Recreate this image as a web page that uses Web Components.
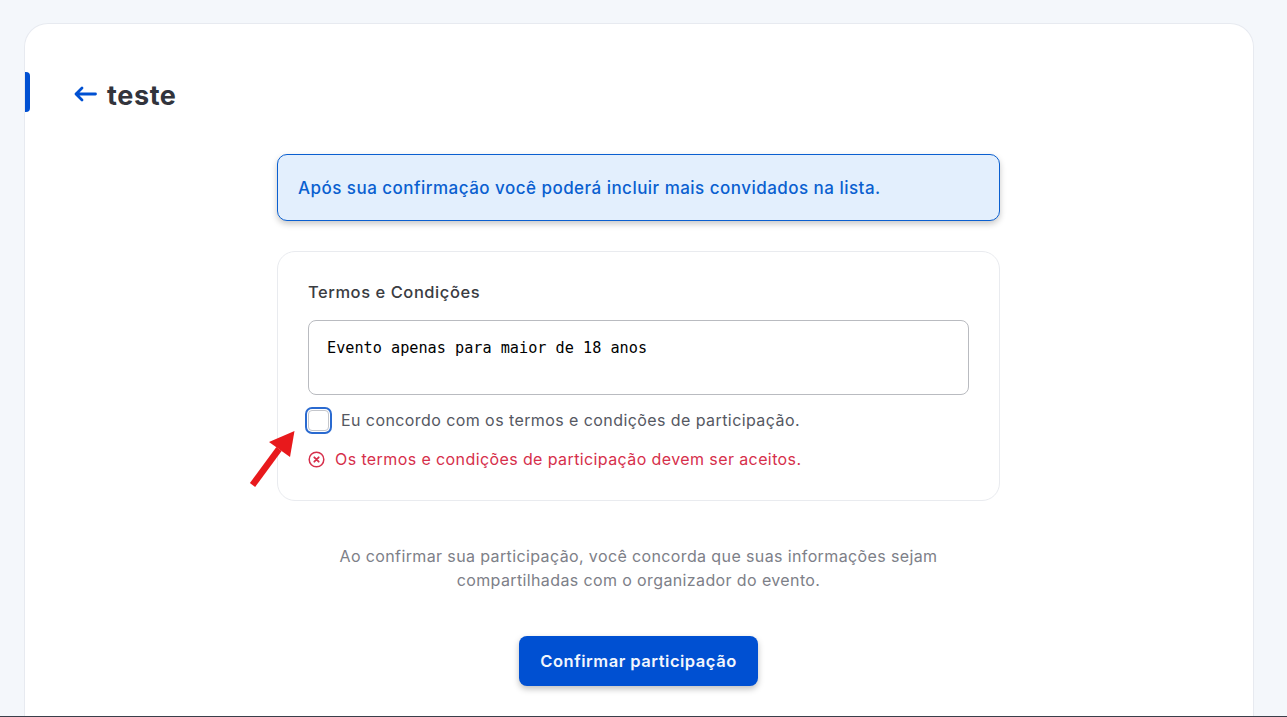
<!DOCTYPE html>
<html lang="pt-BR">
<head>
<meta charset="utf-8">
<title>teste</title>
<style>
html, body { margin: 0; height: 100%; overflow: hidden; }
body { background: #f4f7fb; font-family: Inter, "Open Sans", sans-serif; }
</style>
</head>
<body>
<event-page>
  <page-header slot="header">teste</page-header>
  <info-alert>Após sua confirmação você poderá incluir mais convidados na lista.</info-alert>
  <terms-box heading="Termos e Condições" terms="Evento apenas para maior de 18 anos"></terms-box>
  <p slot="note">Ao confirmar sua participação, você concorda que suas informações sejam<br>compartilhadas com o organizador do evento.</p>
  <primary-button slot="action">Confirmar participação</primary-button>
</event-page>
<script>
"use strict";
class EventPage extends HTMLElement {
    constructor() {
        super();
        this.attachShadow({ mode: 'open' });
    }
    connectedCallback() {
        this.shadowRoot.innerHTML = `
            <style>
                :host {
                    display: flex;
                    flex-direction: column;
                    box-sizing: border-box;
                    height: 717px;
                    padding-top: 23px;
                    border-bottom: 1px solid #3a3f4a;
                }
                .card {
                    flex: 1;
                    margin: 0 33px 0 24px;
                    min-height: 0;
                    background: #fff;
                    border: 1px solid #e7eaf0;
                    border-bottom: none;
                    border-radius: 24px 24px 0 0;
                    overflow: hidden;
                    position: relative;
                }
                .accent {
                    position: absolute;
                    left: 0;
                    top: 48px;
                    width: 5px;
                    height: 40px;
                    background: #0050d2;
                    border-radius: 0 4px 4px 0;
                }
                .head { padding: 53px 0 0 49px; }
                .col {
                    width: 723px;
                    margin: 41px auto 0 252px;
                    display: flex;
                    flex-direction: column;
                }
                ::slotted(p) {
                    margin: 43px 0 0;
                    font-size: 16px;
                    letter-spacing: .38px;
                    line-height: 24px;
                    color: #7d8088;
                    text-align: center;
                }
                .action {
                    display: flex;
                    justify-content: center;
                    margin-top: 44px;
                }
            </style>
            <div class="card">
                <div class="accent"></div>
                <div class="head"><slot name="header"></slot></div>
                <div class="col">
                    <slot></slot>
                    <slot name="note"></slot>
                    <div class="action"><slot name="action"></slot></div>
                </div>
            </div>
        `;
    }
}
customElements.define('event-page', EventPage);

class PageHeader extends HTMLElement {
    constructor() {
        super();
        this.attachShadow({ mode: 'open' });
    }
    connectedCallback() {
        this.shadowRoot.innerHTML = `
            <style>
                :host {
                    display: flex;
                    align-items: center;
                    gap: 10px;
                    height: 36px;
                    font-size: 27px;
                    letter-spacing: .6px;
                    font-weight: 700;
                    color: #32343c;
                }
                svg { display: block; margin-top: -3px; }
            </style>
            <svg width="23" height="16" viewBox="0 0 23 16" fill="none" stroke="#0050d2" stroke-width="2.8" stroke-linecap="round" stroke-linejoin="round">
                <path d="M21.5 8H2M8 2 2 8l6 6"/>
            </svg>
            <slot></slot>
        `;
    }
}
customElements.define('page-header', PageHeader);

class InfoAlert extends HTMLElement {
    constructor() {
        super();
        this.attachShadow({ mode: 'open' });
    }
    connectedCallback() {
        this.shadowRoot.innerHTML = `
            <style>
                :host {
                    display: flex;
                    align-items: center;
                    box-sizing: border-box;
                    height: 67px;
                    padding: 0 20px;
                    background: #e3effd;
                    border: 1px solid #0a5fd0;
                    border-radius: 10px;
                    box-shadow: 0 3px 6px rgba(0, 0, 0, .22);
                    font-size: 17px;
                    letter-spacing: .47px;
                    font-weight: 500;
                    color: #0a5fd0;
                }
            </style>
            <slot></slot>
        `;
    }
}
customElements.define('info-alert', InfoAlert);

class TermsBox extends HTMLElement {
    constructor() {
        super();
        this.attachShadow({ mode: 'open' });
    }
    connectedCallback() {
        this.shadowRoot.innerHTML = `
            <style>
                :host {
                    display: block;
                    position: relative;
                    box-sizing: border-box;
                    height: 250px;
                    margin-top: 30px;
                    padding: 29px 30px 0 30px;
                    background: #fff;
                    border: 1px solid #e9ebef;
                    border-radius: 18px;
                }
                h3 {
                    margin: 0;
                    font-size: 16.5px;
                    letter-spacing: .55px;
                    line-height: 22px;
                    font-weight: 500;
                    color: #3a3c42;
                }
                .terms {
                    box-sizing: border-box;
                    height: 75px;
                    margin-top: 17px;
                    padding: 17px 18px;
                    border: 1px solid #b9bbc0;
                    border-radius: 8px;
                    font: 15.2px/20px "DejaVu Sans Mono", "Liberation Mono", monospace;
                    color: #000;
                }
                .check {
                    display: flex;
                    align-items: center;
                    gap: 12px;
                    margin-top: 11px;
                    height: 28px;
                    font-size: 16px;
                    letter-spacing: .42px;
                    color: #555862;
                }
                .box {
                    box-sizing: border-box;
                    width: 21px;
                    height: 21px;
                    background: #fff;
                    border: 1px solid #c4c6cb;
                    border-radius: 4px;
                    box-shadow: 0 0 0 1px #fff, 0 0 0 3px #2a6ad0;
                }
                .error {
                    display: flex;
                    align-items: center;
                    gap: 10px;
                    margin-top: 14px;
                    height: 22px;
                    font-size: 16px;
                    letter-spacing: .4px;
                    color: #d62f4b;
                }
                svg { display: block; flex: none; }
            </style>
            <h3></h3>
            <div class="terms"></div>
            <label class="check"><span class="box"></span><span>Eu concordo com os termos e condições de participação.</span></label>
            <div class="error">
                <svg width="17" height="17" viewBox="0 0 17 17" fill="none" stroke="#d62f4b" stroke-linecap="round">
                    <circle cx="8.5" cy="8.5" r="7.3" stroke-width="1.5"/>
                    <path d="M6.3 6.3l4.4 4.4M10.7 6.3l-4.4 4.4" stroke-width="1.8"/>
                </svg>
                <span>Os termos e condições de participação devem ser aceitos.</span>
            </div>
            <svg class="arrow" style="position:absolute;left:-29px;top:178px" width="48" height="58" viewBox="0 0 48 58">
                <path d="M3.5 55 30 19" stroke="#e8191c" stroke-width="6.5" fill="none"/>
                <path d="M45.5 1 20 12 41 27Z" fill="#e8191c"/>
            </svg>
        `;
        this.shadowRoot.querySelector('h3').textContent = this.getAttribute('heading');
        this.shadowRoot.querySelector('.terms').textContent = this.getAttribute('terms');
    }
}
customElements.define('terms-box', TermsBox);

class PrimaryButton extends HTMLElement {
    constructor() {
        super();
        this.attachShadow({ mode: 'open' });
    }
    connectedCallback() {
        this.shadowRoot.innerHTML = `
            <style>
                :host {
                    display: flex;
                    align-items: center;
                    justify-content: center;
                    width: 239px;
                    height: 50px;
                    background: #0050d2;
                    border-radius: 8px;
                    box-shadow: 0 3px 6px rgba(0, 0, 0, .25);
                    font-size: 16.5px;
                    letter-spacing: .52px;
                    font-weight: 600;
                    color: #f2f6fd;
                    cursor: pointer;
                }
            </style>
            <slot></slot>
        `;
    }
}
customElements.define('primary-button', PrimaryButton);
</script>
</body>
</html>
